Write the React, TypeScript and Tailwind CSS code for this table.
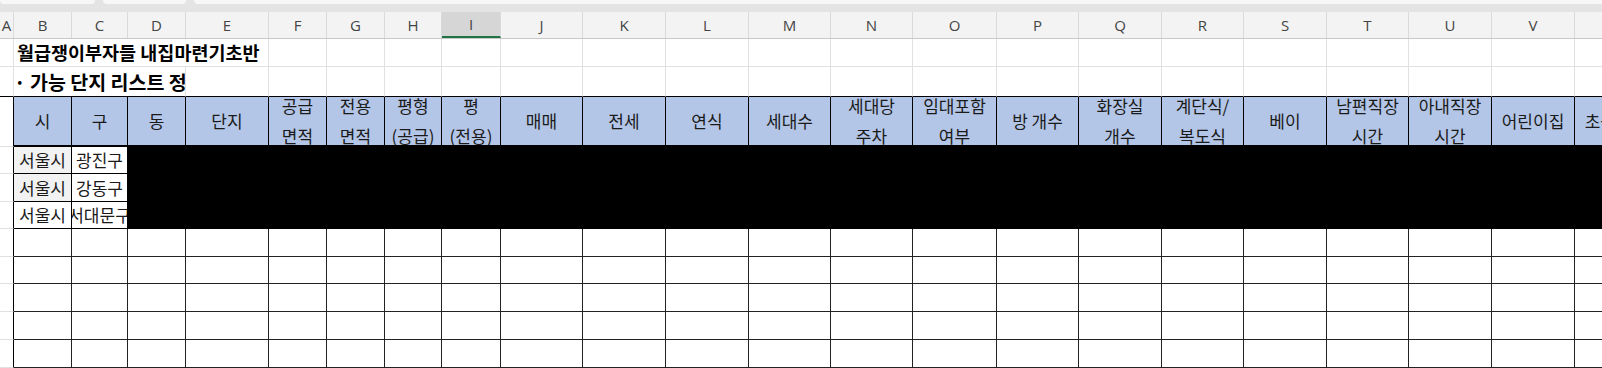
const KR = "font-['Malgun_Gothic','Noto_Sans_CJK_KR',sans-serif]";

type Col = { letter: string; w: string; head: string };

const cols: Col[] = [
  { letter: "A", w: "w-[14px]", head: "" },
  { letter: "B", w: "w-[58px]", head: "시" },
  { letter: "C", w: "w-[56px]", head: "구" },
  { letter: "D", w: "w-[58px]", head: "동" },
  { letter: "E", w: "w-[83px]", head: "단지" },
  { letter: "F", w: "w-[58px]", head: "공급\n면적" },
  { letter: "G", w: "w-[58px]", head: "전용\n면적" },
  { letter: "H", w: "w-[57px]", head: "평형\n(공급)" },
  { letter: "I", w: "w-[59px]", head: "평\n(전용)" },
  { letter: "J", w: "w-[82px]", head: "매매" },
  { letter: "K", w: "w-[83px]", head: "전세" },
  { letter: "L", w: "w-[83px]", head: "연식" },
  { letter: "M", w: "w-[82px]", head: "세대수" },
  { letter: "N", w: "w-[82px]", head: "세대당\n주차" },
  { letter: "O", w: "w-[84px]", head: "임대포함\n여부" },
  { letter: "P", w: "w-[82px]", head: "방 개수" },
  { letter: "Q", w: "w-[83px]", head: "화장실\n개수" },
  { letter: "R", w: "w-[82px]", head: "계단식/\n복도식" },
  { letter: "S", w: "w-[83px]", head: "베이" },
  { letter: "T", w: "w-[82px]", head: "남편직장\n시간" },
  { letter: "U", w: "w-[83px]", head: "아내직장\n시간" },
  { letter: "V", w: "w-[83px]", head: "어린이집" },
  { letter: "W", w: "w-[83px]", head: "초등학교" },
];

const data = [
  { si: "서울시", gu: "광진구", gray: true },
  { si: "서울시", gu: "강동구", gray: true },
  { si: "서울시", gu: "서대문구", gray: false },
];

const emptyRows = ["h-[28px]", "h-[27px]", "h-[28px]", "h-[28px]", "h-[28px]"];
const dataHeights = ["h-[27px]", "h-[28px]", "h-[27px]"];

function ColumnHeader() {
  return (
    <div className="flex h-[27px] bg-[#f3f3f3] border-b border-[#c8c8c8]">
      {cols.map((c) => (
        <div
          key={c.letter}
          className={`${c.w} shrink-0 flex items-center justify-center border-r border-[#dadada] text-[15px] text-[#444] font-['Open_Sans',sans-serif] ${
            c.letter === "I" ? "bg-[#d6d6d6] border-b-2 border-b-[#217346]" : ""
          }`}
        >
          {c.letter}
        </div>
      ))}
    </div>
  );
}

function TitleRow({ text, span, size, h, dark }: { text: string; span: number; size: string; h: string; dark?: boolean }) {
  const spanW = cols.slice(1, span + 1);
  const rest = cols.slice(span + 1);
  const width = spanW.reduce((s, c) => s + parseInt(c.w.slice(3)), 0);
  return (
    <div className={`flex ${h}`}>
      <div className={`w-[14px] shrink-0 border-r border-b ${dark ? "border-b-black" : ""} border-[#e1e1e1]`} />
      <div
        className={`shrink-0 overflow-hidden whitespace-nowrap flex items-center border-r border-[#e1e1e1] border-b ${dark ? "border-b-black" : ""} ${KR} ${size} font-bold text-black`}
        style={{ width }}
      >
        {text}
      </div>
      {rest.map((c) => (
        <div key={c.letter} className={`${c.w} shrink-0 border-r border-b border-[#e1e1e1] ${dark ? "border-b-black" : ""}`} />
      ))}
    </div>
  );
}

function HeaderRow() {
  return (
    <div className="flex h-[50px]">
      <div className="w-[14px] shrink-0 border-r border-r-black border-b border-b-[#e1e1e1]" />
      {cols.slice(1).map((c) => (
        <div
          key={c.letter}
          className={`${c.w} shrink-0 flex items-center justify-center text-center overflow-hidden bg-[#b4c6e7] border-r border-black border-b-2 leading-[30px] text-[17px] text-[#1a1a1a] ${KR}`}
        >
          <span className="whitespace-pre shrink-0">{c.head}</span>
        </div>
      ))}
    </div>
  );
}

export default function App() {
  return (
    <div className="w-[1602px] h-[368px] overflow-hidden bg-white">
      <div className="flex h-[12px] bg-[#e4e4e4] items-start gap-[27px]">
        <div className="w-[95px] h-[4px] bg-[#f7f7f7] rounded-b-[4px]" />
        <div className="w-[83px] h-[4px] bg-[#f7f7f7] rounded-b-[4px] -ml-[19px]" />
        <div className="flex-1 h-[4px] bg-[#f7f7f7] rounded-bl-[4px] -ml-[19px]" />
      </div>
      <ColumnHeader />
      <TitleRow text="월급쟁이부자들 내집마련기초반" span={4} size="text-[18.5px] pl-[3px]" h="h-[28px]" />
      <TitleRow text="· 가능 단지 리스트 정리" span={3} size="text-[19.5px]" h="h-[30px]" dark />
      <HeaderRow />
      {data.map((r, i) => (
        <div key={i} className={`flex ${dataHeights[i]}`}>
          <div className="w-[14px] shrink-0 border-r border-r-black border-b border-b-[#e1e1e1]" />
          <div
            className={`w-[58px] shrink-0 flex items-center justify-center overflow-hidden whitespace-nowrap border-r border-b border-black text-[17px] text-[#1a1a1a] ${KR} ${
              r.gray ? "bg-[#f2f2f2]" : "bg-white"
            }`}
          >
            <span className="shrink-0">{r.si}</span>
          </div>
          <div className={`w-[56px] shrink-0 flex items-center justify-center overflow-hidden whitespace-nowrap border-r border-b border-black text-[17px] text-[#1a1a1a] ${KR}`}>
            <span className="shrink-0">{r.gu}</span>
          </div>
          {cols.slice(3).map((c) => (
            <div key={c.letter} className={`${c.w} shrink-0 bg-black`} />
          ))}
        </div>
      ))}
      {emptyRows.map((h, i) => (
        <div key={i} className={`flex ${h}`}>
          <div className="w-[14px] shrink-0 border-r border-r-black border-b border-b-[#e1e1e1]" />
          {cols.slice(1).map((c) => (
            <div key={c.letter} className={`${c.w} shrink-0 border-r border-b border-[#222]`} />
          ))}
        </div>
      ))}
    </div>
  );
}
